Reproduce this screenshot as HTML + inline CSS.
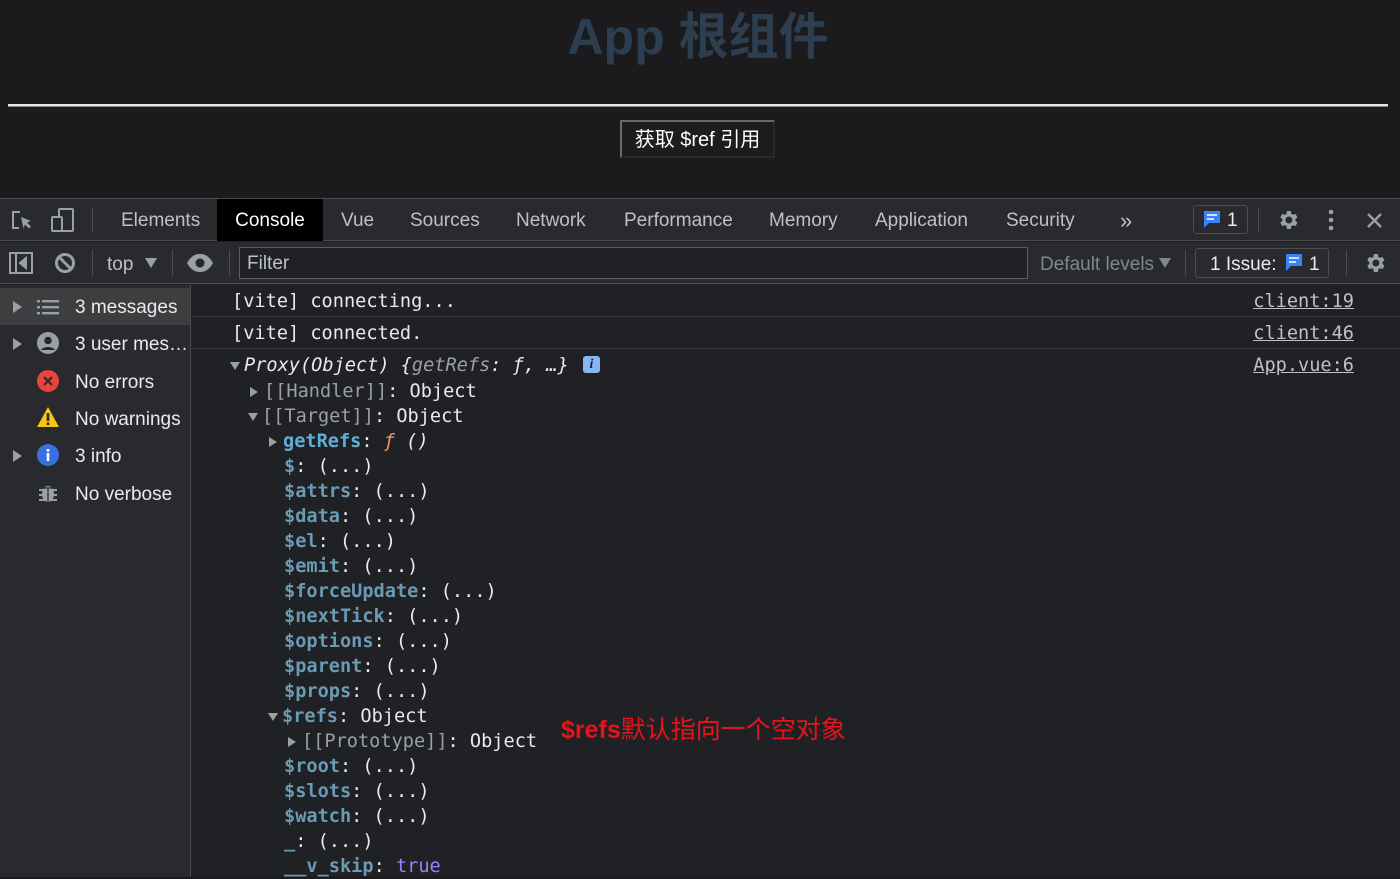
<!DOCTYPE html>
<html><head><meta charset="utf-8"><style>
*{margin:0;padding:0;box-sizing:border-box}
body{width:1400px;height:876px;overflow:hidden;background:#1b1b1d;font-family:"Liberation Sans","Noto Sans CJK SC",sans-serif;position:relative;color:#e8eaed}
.abs{position:absolute}
.title{left:0;width:1396px;top:4px;text-align:center;font-size:50px;font-weight:bold;color:#2c3e50;line-height:66px}
.hr{left:8px;width:1380px;top:104px;height:3px;background:#e6e6e6;border-bottom:1px solid #888}
.btn{left:620px;top:120px;width:155px;height:38px;border:2px solid #6b6b6b;border-right-color:#2a2a2a;border-bottom-color:#2a2a2a;background:#1d1d1d;color:#fff;font-size:20px;line-height:36px;text-align:center}
.dt{left:0;top:198px;width:1400px;height:678px;background:#202124;border-top:1px solid #4a4c50}
.tabs{left:0;top:0;width:1400px;height:42px;background:#292a2d;border-bottom:1px solid #494c50}
.tab{position:absolute;top:0;height:42px;line-height:44px;font-size:19px;color:#bdc1c6}
.tb{left:0;top:43px;width:1400px;height:42px;background:#292a2d;border-bottom:1px solid #494c50}
.sep{position:absolute;width:1px;background:#4a4c50}
.side{left:0;top:86px;width:191px;height:592px;background:#292a2d;border-right:1px solid #494c50}
.si{position:absolute;left:0;width:190px;height:37px;font-size:19px;line-height:39px;color:#e8eaed}
.mono{font-family:"DejaVu Sans Mono","Liberation Mono",monospace;font-size:18.6px}
.ln{position:absolute;white-space:pre;line-height:25px}
.k{color:#5db0d7}.kd{color:#6a9bb5}.g{color:#9aa0a6}.w{color:#e8eaed}
.src{position:absolute;right:46px;color:#bdc1c6;text-decoration:underline}
.tri{display:inline-block;width:0;height:0;border-left:5px solid transparent;border-right:5px solid transparent;border-top:8px solid #9aa0a6;vertical-align:middle;margin-right:4px}
.trr{display:inline-block;width:0;height:0;border-top:5px solid transparent;border-bottom:5px solid transparent;border-left:8px solid #9aa0a6;vertical-align:middle;margin-right:6px}
</style></head><body>
<div class="abs title">App 根组件</div>
<div class="abs hr"></div>
<div class="abs btn">获取 $ref 引用</div>

<div class="abs dt">
 <div class="abs tabs">
  <svg class="abs" style="left:10px;top:10px" width="24" height="24" viewBox="0 0 24 24" fill="none" stroke="#9aa0a6" stroke-width="2"><path d="M10 3H3v16h6"/><path d="M11 8l10 4-4 1.5 4 4-2 2-4-4-1.5 4z" fill="#9aa0a6" stroke="none"/></svg>
  <svg class="abs" style="left:50px;top:8px" width="26" height="27" viewBox="0 0 26 27" fill="none" stroke="#9aa0a6" stroke-width="2"><rect x="9" y="2" width="14" height="22" rx="1"/><rect x="2" y="10" width="10" height="14" rx="1" fill="#292a2d"/></svg>
  <div class="sep" style="left:92px;top:9px;height:24px"></div>
  <div class="tab" style="left:121px">Elements</div>
  <div class="tab" style="left:217px;width:106px;background:#000;color:#fff;text-align:center">Console</div>
  <div class="tab" style="left:341px">Vue</div>
  <div class="tab" style="left:410px">Sources</div>
  <div class="tab" style="left:516px">Network</div>
  <div class="tab" style="left:624px">Performance</div>
  <div class="tab" style="left:769px">Memory</div>
  <div class="tab" style="left:875px">Application</div>
  <div class="tab" style="left:1006px">Security</div>
  <div class="tab" style="left:1120px;font-size:22px">»</div>
  <div class="abs" style="left:1193px;top:6px;width:55px;height:29px;border:1px solid #4a4c50;border-radius:3px"></div>
  <svg class="abs" style="left:1203px;top:11px" width="18" height="19" viewBox="0 0 18 19"><path d="M1 1h16v12H6l-5 5z" fill="#3b82f6"/><path d="M4 5h10M4 9h7" stroke="#fff" stroke-width="1.6"/></svg>
  <div class="tab" style="left:1227px;color:#e8eaed">1</div>
  <div class="sep" style="left:1258px;top:9px;height:24px"></div>
  <svg class="abs" style="left:1276px;top:9px" width="24" height="24" viewBox="0 0 24 24"><path fill="#9aa0a6" d="M19.4 13a7.5 7.5 0 000-2l2.1-1.6-2-3.5-2.5 1a7 7 0 00-1.7-1L14.9 3h-4l-.4 2.9a7 7 0 00-1.7 1l-2.5-1-2 3.5L6.4 11a7.5 7.5 0 000 2l-2.1 1.6 2 3.5 2.5-1a7 7 0 001.7 1l.4 2.9h4l.4-2.9a7 7 0 001.7-1l2.5 1 2-3.5zM12.9 15.5a3.5 3.5 0 110-7 3.5 3.5 0 010 7z"/></svg>
  <svg class="abs" style="left:1326px;top:9px" width="10" height="24"><circle cx="5" cy="4" r="2.3" fill="#9aa0a6"/><circle cx="5" cy="12" r="2.3" fill="#9aa0a6"/><circle cx="5" cy="20" r="2.3" fill="#9aa0a6"/></svg>
  <svg class="abs" style="left:1366px;top:13px" width="17" height="17"><path d="M2 2l13 13M15 2L2 15" stroke="#9aa0a6" stroke-width="2.4"/></svg>
 </div>
 <div class="abs tb">
  <svg class="abs" style="left:9px;top:10px" width="24" height="22" viewBox="0 0 24 22" fill="none" stroke="#9aa0a6" stroke-width="2"><rect x="1" y="1" width="22" height="20"/><path d="M7 1v20"/><path d="M17 6l-6 5 6 5z" fill="#9aa0a6"/></svg>
  <svg class="abs" style="left:54px;top:10px" width="22" height="22" fill="none" stroke="#9aa0a6" stroke-width="3"><circle cx="11" cy="11" r="8.5"/><path d="M5 5l12 12"/></svg>
  <div class="sep" style="left:92px;top:8px;height:26px"></div>
  <div class="tab" style="left:107px;top:1px">top</div>
  <div class="abs" style="left:145px;top:16px;border-left:6px solid transparent;border-right:6px solid transparent;border-top:10px solid #9aa0a6"></div>
  <div class="sep" style="left:172px;top:8px;height:26px"></div>
  <svg class="abs" style="left:186px;top:11px" width="28" height="20"><path d="M1 10C5 3 9 1 14 1s9 2 13 9c-4 7-8 9-13 9S5 17 1 10z" fill="#9aa0a6"/><circle cx="14" cy="10" r="4.5" fill="#292a2d"/></svg>
  <div class="sep" style="left:229px;top:8px;height:26px"></div>
  <div class="abs" style="left:239px;top:5px;width:789px;height:32px;border:1px solid #5a5d62;background:#202124;color:#bdc1c6;font-size:19px;line-height:32px;padding-left:7px">Filter</div>
  <div class="tab" style="left:1040px;top:1px;color:#80868b">Default levels</div>
  <div class="abs" style="left:1159px;top:16px;border-left:6px solid transparent;border-right:6px solid transparent;border-top:10px solid #80868b"></div>
  <div class="sep" style="left:1185px;top:8px;height:26px"></div>
  <div class="abs" style="left:1195px;top:6px;width:134px;height:30px;border:1px solid #4a4c50;border-radius:3px"></div>
  <div class="tab" style="left:1210px;top:1px;color:#e8eaed">1 Issue:</div>
  <svg class="abs" style="left:1285px;top:11px" width="18" height="19" viewBox="0 0 18 19"><path d="M1 1h16v12H6l-5 5z" fill="#3b82f6"/><path d="M4 5h10M4 9h7" stroke="#fff" stroke-width="1.6"/></svg>
  <div class="tab" style="left:1309px;top:1px;color:#e8eaed">1</div>
  <div class="sep" style="left:1346px;top:8px;height:26px"></div>
  <svg class="abs" style="left:1363px;top:9px" width="24" height="24" viewBox="0 0 24 24"><path fill="#9aa0a6" d="M19.4 13a7.5 7.5 0 000-2l2.1-1.6-2-3.5-2.5 1a7 7 0 00-1.7-1L14.9 3h-4l-.4 2.9a7 7 0 00-1.7 1l-2.5-1-2 3.5L6.4 11a7.5 7.5 0 000 2l-2.1 1.6 2 3.5 2.5-1a7 7 0 001.7 1l.4 2.9h4l.4-2.9a7 7 0 001.7-1l2.5 1 2-3.5zM12.9 15.5a3.5 3.5 0 110-7 3.5 3.5 0 010 7z"/></svg>
 </div>
 <div class="abs side">
  <div class="si" style="top:3px;background:#3d3e40"></div>
  <div class="abs" style="left:13px;top:16px;border-top:6px solid transparent;border-bottom:6px solid transparent;border-left:9px solid #9aa0a6"></div>
  <svg class="abs" style="left:37px;top:14px" width="22" height="16" fill="#9aa0a6"><rect x="0" y="1" width="3" height="2.4"/><rect x="5" y="1" width="17" height="2.4"/><rect x="0" y="7" width="3" height="2.4"/><rect x="5" y="7" width="17" height="2.4"/><rect x="0" y="13" width="3" height="2.4"/><rect x="5" y="13" width="17" height="2.4"/></svg>
  <div class="si" style="top:3px;left:75px">3 messages</div>
  <div class="abs" style="left:13px;top:53px;border-top:6px solid transparent;border-bottom:6px solid transparent;border-left:9px solid #9aa0a6"></div>
  <svg class="abs" style="left:37px;top:47px" width="22" height="22"><circle cx="11" cy="11" r="11" fill="#9aa0a6"/><circle cx="11" cy="8.5" r="3.8" fill="#292a2d"/><path d="M4 18c2-4 12-4 14 0" fill="#292a2d"/></svg>
  <div class="si" style="top:40px;left:75px;width:112px;overflow:hidden;white-space:nowrap">3 user mes…</div>
  <svg class="abs" style="left:37px;top:85px" width="22" height="22"><circle cx="11" cy="11" r="11" fill="#e8453c"/><path d="M7 7l8 8M15 7l-8 8" stroke="#292a2d" stroke-width="2"/></svg>
  <div class="si" style="top:78px;left:75px">No errors</div>
  <svg class="abs" style="left:36px;top:121px" width="24" height="22"><path d="M12 1L23 21H1z" fill="#f9c513"/><rect x="10.7" y="7" width="2.6" height="8" fill="#292a2d"/><rect x="10.7" y="16.5" width="2.6" height="2.6" fill="#292a2d"/></svg>
  <div class="si" style="top:115px;left:75px">No warnings</div>
  <div class="abs" style="left:13px;top:165px;border-top:6px solid transparent;border-bottom:6px solid transparent;border-left:9px solid #9aa0a6"></div>
  <svg class="abs" style="left:37px;top:159px" width="22" height="22"><circle cx="11" cy="11" r="11" fill="#3a6fe0"/><rect x="9.7" y="9" width="2.6" height="8" fill="#fff"/><rect x="9.7" y="5" width="2.6" height="2.6" fill="#fff"/></svg>
  <div class="si" style="top:152px;left:75px">3 info</div>
  <svg class="abs" style="left:38px;top:197px" width="20" height="22" fill="#9aa0a6"><ellipse cx="10" cy="12" rx="6" ry="8"/><path d="M1 8h18M1 13h18M1 18h18" stroke="#9aa0a6" stroke-width="2"/><path d="M5 6h10" stroke="#292a2d" stroke-width="1.2"/><path d="M10 5v16" stroke="#292a2d" stroke-width="1.2"/></svg>
  <div class="si" style="top:190px;left:75px">No verbose</div>
 </div>
 <div class="abs mono" style="left:192px;top:87px;width:1208px;height:592px">
  <div class="abs" style="left:0;top:30px;width:1208px;height:1px;background:#3c3d40"></div>
  <div class="abs" style="left:0;top:62px;width:1208px;height:1px;background:#3c3d40"></div>
  <div class="ln w" style="left:40px;top:3px">[vite] connecting...</div>
  <div class="src ln" style="top:3px">client:19</div>
  <div class="ln w" style="left:40px;top:35px">[vite] connected.</div>
  <div class="src ln" style="top:35px">client:46</div>
  <div class="ln" style="left:38px;top:67px;font-style:italic"><span class="tri"></span>Proxy(Object) {<span class="g">getRefs</span>: ƒ, …}</div>
  <div class="abs" style="left:391px;top:70px;width:17px;height:17px;background:#8ab4f8;border-radius:3px;color:#202124;font:italic bold 14px 'Liberation Serif',serif;text-align:center;line-height:17px">i</div>
  <div class="src ln" style="top:67px">App.vue:6</div>
  <div class="ln" style="left:58px;top:93px"><span class="trr"></span><span class="g">[[Handler]]</span>: Object</div>
  <div class="ln" style="left:56px;top:118px"><span class="tri"></span><span class="g">[[Target]]</span>: Object</div>
  <div class="ln" style="left:77px;top:143px"><span class="trr"></span><b class="k">getRefs</b>: <i style="color:#f29766">ƒ</i> <i>()</i></div>
  <div class="ln" style="left:92px;top:168px"><b class="kd">$</b>: (...)</div>
  <div class="ln" style="left:92px;top:193px"><b class="kd">$attrs</b>: (...)</div>
  <div class="ln" style="left:92px;top:218px"><b class="kd">$data</b>: (...)</div>
  <div class="ln" style="left:92px;top:243px"><b class="kd">$el</b>: (...)</div>
  <div class="ln" style="left:92px;top:268px"><b class="kd">$emit</b>: (...)</div>
  <div class="ln" style="left:92px;top:293px"><b class="kd">$forceUpdate</b>: (...)</div>
  <div class="ln" style="left:92px;top:318px"><b class="kd">$nextTick</b>: (...)</div>
  <div class="ln" style="left:92px;top:343px"><b class="kd">$options</b>: (...)</div>
  <div class="ln" style="left:92px;top:368px"><b class="kd">$parent</b>: (...)</div>
  <div class="ln" style="left:92px;top:393px"><b class="kd">$props</b>: (...)</div>
  <div class="ln" style="left:76px;top:418px"><span class="tri"></span><b class="kd">$refs</b>: Object</div>
  <div class="ln" style="left:96px;top:443px"><span class="trr"></span><span class="g">[[Prototype]]</span>: Object</div>
  <div class="ln" style="left:92px;top:468px"><b class="kd">$root</b>: (...)</div>
  <div class="ln" style="left:92px;top:493px"><b class="kd">$slots</b>: (...)</div>
  <div class="ln" style="left:92px;top:518px"><b class="kd">$watch</b>: (...)</div>
  <div class="ln" style="left:92px;top:543px"><b class="kd">_</b>: (...)</div>
  <div class="ln" style="left:92px;top:568px"><b class="kd">__v_skip</b>: <span style="color:#9980ff">true</span></div>
 </div>
 <div class="abs" style="left:561px;top:515px;color:#e8131a;font-size:25px;line-height:33px;font-family:'Liberation Sans','Noto Sans CJK SC',sans-serif"><b>$refs</b>默认指向一个空对象</div>
</div>
</body></html>
